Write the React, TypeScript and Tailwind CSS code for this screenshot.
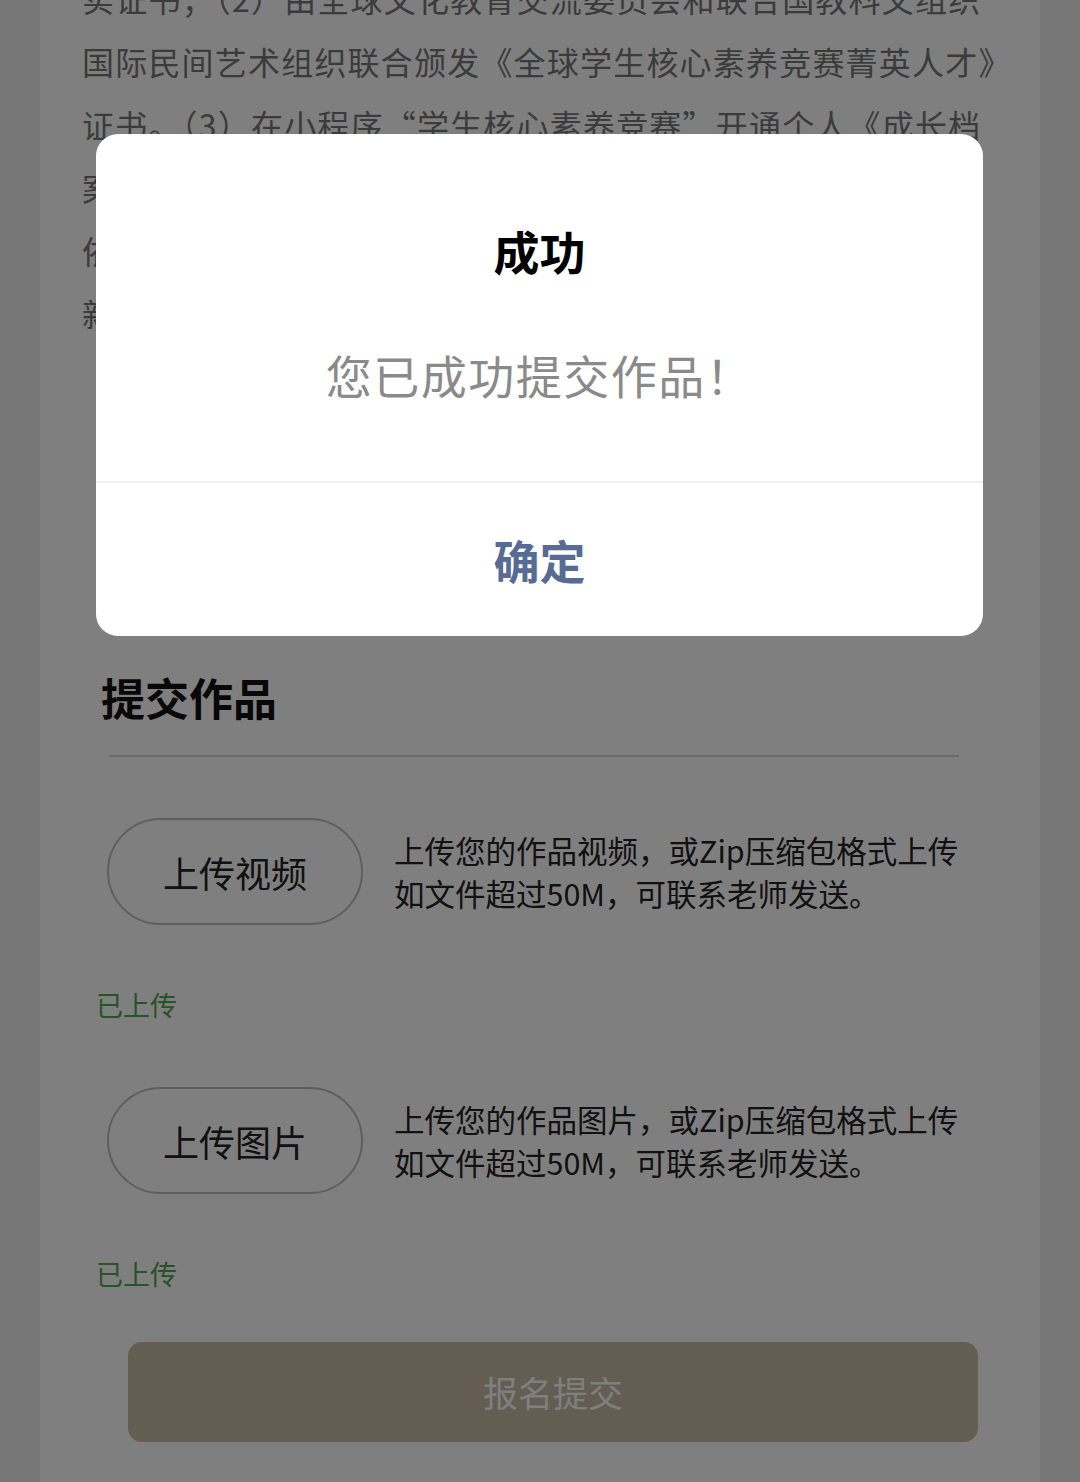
const bodyLines = [
  "实证书；（2）由全球文化教育交流委员会和联合国教科文组织",
  "国际民间艺术组织联合颁发《全球学生核心素养竞赛菁英人才》",
  "证书。（3）在小程序“学生核心素养竞赛”开通个人《成长档",
  "案》，记录学生参赛成绩与获奖情况，可作为升学评优的某",
  "依据，并可在成长档案中查看往届获奖作品与名师点评瓜",
  "新",
];

function UploadRow({ label, desc }: { label: string; desc: string }) {
  return (
    <div>
      <div className="flex items-center pl-[67px]">
        <button className="flex h-[107px] w-[256px] shrink-0 items-center justify-center rounded-[54px] border-2 border-[#bdbdbd] text-[36px] text-[#222]">
          {label}
        </button>
        <div className="ml-[31px] text-[30.5px] leading-[43px] text-[#222]">
          <p>上传您的作品{desc}，或Zip压缩包格式上传</p>
          <p>如文件超过50M，可联系老师发送。</p>
        </div>
      </div>
      <p className="mt-[60px] pl-[56px] text-[27px] leading-[40px] text-[#4aa84a]">已上传</p>
    </div>
  );
}

export default function App() {
  return (
    <div
      className="relative h-[1482px] overflow-hidden bg-[#eeeeee]"
      style={{ fontFamily: '"Noto Sans CJK SC", "Noto Sans", sans-serif' }}
    >
      <div className="mx-auto flex h-full w-[1000px] flex-col bg-white">
        <div className="-mt-[33px] pl-[42px] text-[32px] leading-[63px] tracking-[1.2px] text-[#777]">
          {bodyLines.map((line) => (
            <p key={line} className="whitespace-nowrap">
              {line}
            </p>
          ))}
        </div>

        <h2 className="mt-[322px] pl-[61px] text-[44px] font-bold leading-[60px] text-[#111]">提交作品</h2>
        <div className="ml-[69px] mt-[28px] h-[2px] w-[850px] shrink-0 bg-[#d6d6d6]" />

        <div className="mt-[61px]">
          <UploadRow label="上传视频" desc="视频" />
        </div>
        <div className="mt-[62px]">
          <UploadRow label="上传图片" desc="图片" />
        </div>

        <button className="ml-[88px] mt-[48px] flex h-[100px] w-[850px] shrink-0 items-center justify-center rounded-[14px] bg-[#c7bba5] text-[35px] text-white">
          报名提交
        </button>
      </div>

      <div className="absolute inset-0 bg-black/50" />

      <div className="absolute left-[96px] top-[134px] w-[887px] overflow-hidden rounded-[22px] bg-white">
        <div className="flex h-[347px] flex-col items-center">
          <h3 className="mt-[86px] text-[46px] font-bold leading-[60px] text-black">成功</h3>
          <p className="mt-[64px] text-[46px] leading-[60px] tracking-[1.5px] text-[#8a8a8a]">您已成功提交作品！</p>
        </div>
        <div className="h-[2px] bg-[#f0f0f0]" />
        <button className="flex h-[153px] w-full items-center justify-center text-[46px] font-bold text-[#576b95]">
          确定
        </button>
      </div>
    </div>
  );
}
